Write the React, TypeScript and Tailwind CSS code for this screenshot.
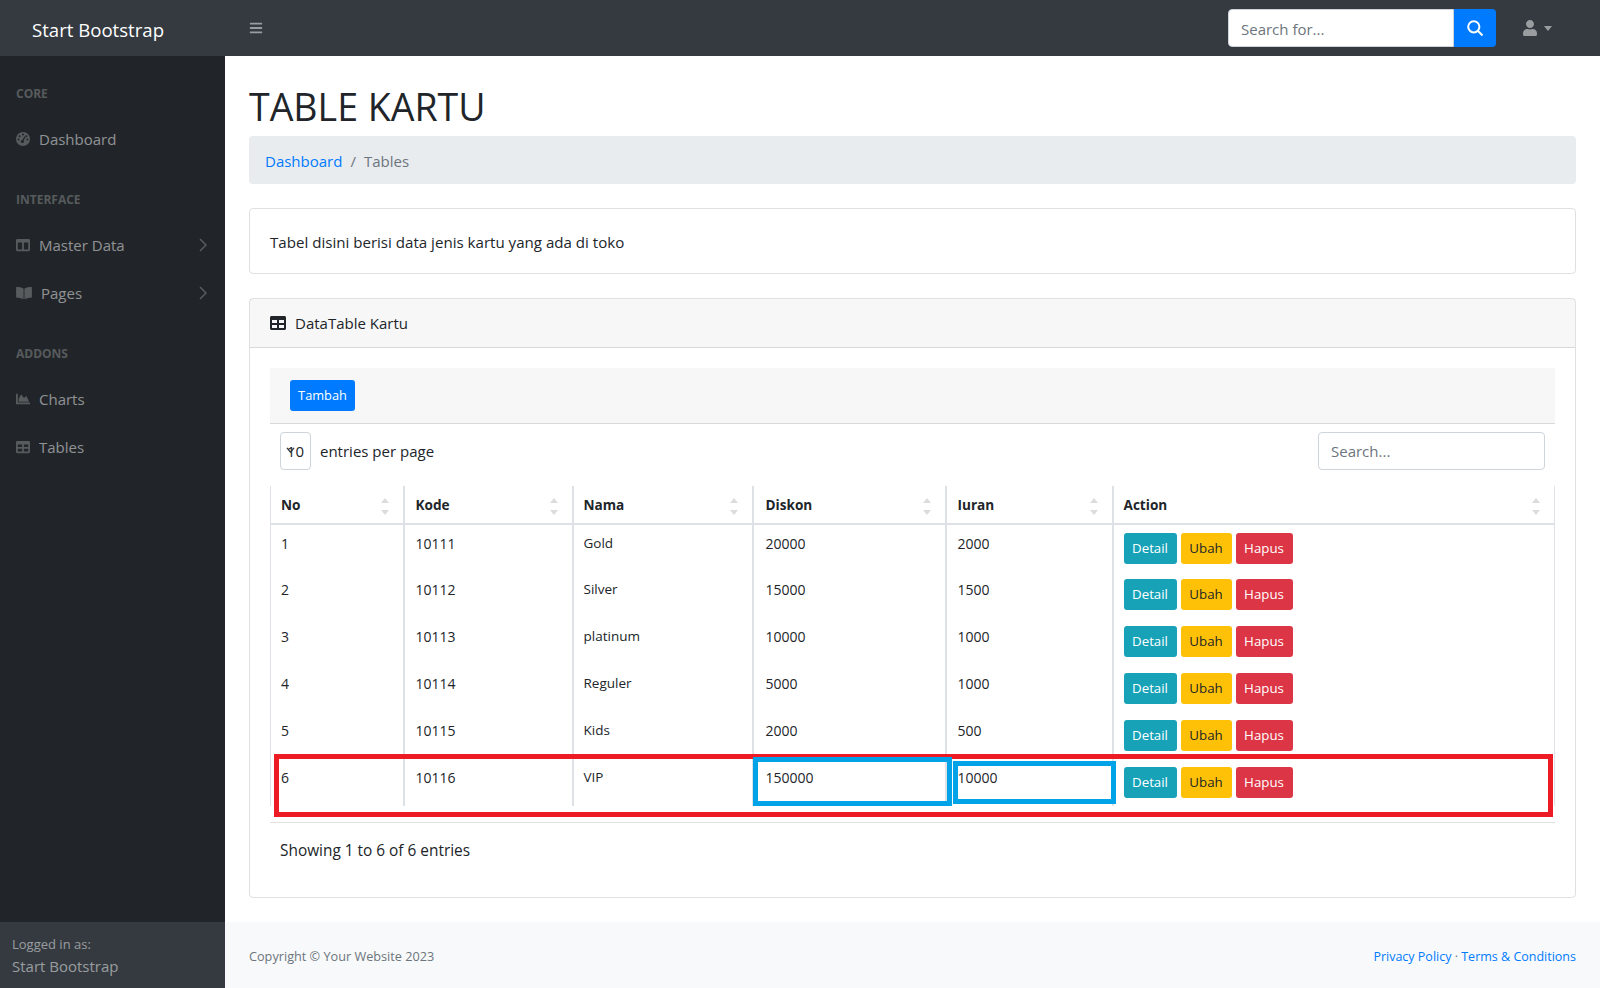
import { FaBars, FaBookOpen, FaChartArea, FaColumns, FaTable, FaUser } from "react-icons/fa";

const rows = [
  ["1", "10111", "Gold", "20000", "2000"],
  ["2", "10112", "Silver", "15000", "1500"],
  ["3", "10113", "platinum", "10000", "1000"],
  ["4", "10114", "Reguler", "5000", "1000"],
  ["5", "10115", "Kids", "2000", "500"],
  ["6", "10116", "VIP", "150000", "10000"],
];

const headers = [
  { label: "No", width: "w-[133px]", pad: "pl-[10px]" },
  { label: "Kode", width: "w-[169px]", pad: "pl-[11px]" },
  { label: "Nama", width: "w-[180px]", pad: "pl-[10px]" },
  { label: "Diskon", width: "w-[193px]", pad: "pl-[12px]" },
  { label: "Iuran", width: "w-[167px]", pad: "pl-[11px]" },
  { label: "Action", width: "w-[442px]", pad: "pl-[10px]" },
];

function SortArrows() {
  return (
    <span className="absolute right-[14px] top-[12px] flex flex-col gap-[7px]">
      <span className="h-0 w-0 border-x-[4px] border-b-[5px] border-x-transparent border-b-[#dcdcdc]" />
      <span className="h-0 w-0 border-x-[4px] border-t-[5px] border-x-transparent border-t-[#dcdcdc]" />
    </span>
  );
}

function GaugeIcon() {
  return (
    <svg viewBox="0 0 14 14" className="h-[14px] w-[14px]">
      <circle cx="7" cy="7" r="7" fill="currentColor" />
      <g fill="#212529">
        <circle cx="7" cy="2.6" r="1" />
        <circle cx="3.6" cy="4.2" r="1" />
        <circle cx="10.4" cy="4.2" r="1" />
        <circle cx="2.6" cy="7.6" r="1" />
        <circle cx="11.4" cy="7.6" r="1" />
        <circle cx="6.4" cy="9.4" r="1.5" />
      </g>
      <path d="M6.4 9.4L9 4.6" stroke="#212529" strokeWidth="1.2" />
    </svg>
  );
}

function Chevron() {
  return (
    <svg viewBox="0 0 8 14" className="ml-auto mb-[2px] h-[14px] w-[8px] text-white/25" fill="none" stroke="currentColor" strokeWidth="1.5">
      <path d="M1 1l6 6-6 6" />
    </svg>
  );
}

function NavHeading({ children }: { children: string }) {
  return <div className="px-4 pt-[27px] pb-[13px] text-[12px] leading-[18px] font-bold uppercase text-white/25">{children}</div>;
}

function NavItem({ icon, label, caret }: { icon: React.ReactNode; label: string; caret?: boolean }) {
  return (
    <div className="flex h-[48px] items-center pl-4 pr-[18px] text-[15px] text-white/50">
      <span className="mr-[9px] mb-[2px] flex text-[14px] text-white/25">{icon}</span>
      <span className="pb-[2px]">{label}</span>
      {caret && <Chevron />}
    </div>
  );
}

export default function App() {
  return (
    <div className="flex h-[988px] flex-col overflow-hidden bg-white text-[15px] text-[#212529] [font-family:'Open_Sans',sans-serif]">
      <nav className="flex h-[56px] shrink-0 items-center bg-[#343a40]">
        <div className="w-[225px] pl-8 pt-[4px] text-[18.6px] text-white">Start Bootstrap</div>
        <button className="ml-[24px] text-[14px] text-white/50">
          <FaBars />
        </button>
        <div className="ml-auto flex h-[38px] w-[268px] overflow-hidden rounded">
          <input
            placeholder="Search for..."
            className="min-w-0 flex-1 rounded-l border border-[#ced4da] bg-white px-3 pt-[2px] text-[15px] outline-none placeholder:text-[#6c757d]"
          />
          <div className="flex w-[42px] items-center justify-center bg-[#007bff] text-white">
            <svg viewBox="0 0 16 16" className="h-[16px] w-[16px]" fill="none" stroke="currentColor" strokeWidth="2">
              <circle cx="6.8" cy="6.8" r="5.6" />
              <path d="M10.8 10.8L15.5 15.5" />
            </svg>
          </div>
        </div>
        <div className="ml-[26px] mr-[48px] flex items-center gap-[6px] text-white/50">
          <FaUser className="text-[16px]" />
          <span className="h-0 w-0 border-x-[4px] border-t-[5px] border-x-transparent border-t-white/50" />
        </div>
      </nav>

      <div className="flex min-h-0 flex-1">
        <aside className="flex w-[225px] shrink-0 flex-col bg-[#212529]">
          <div className="flex-1 pt-[2px]">
            <NavHeading>Core</NavHeading>
            <NavItem icon={<GaugeIcon />} label="Dashboard" />
            <NavHeading>Interface</NavHeading>
            <NavItem icon={<FaColumns />} label="Master Data" caret />
            <NavItem icon={<FaBookOpen className="h-[14px] w-[16px]" />} label="Pages" caret />
            <NavHeading>Addons</NavHeading>
            <NavItem icon={<FaChartArea />} label="Charts" />
            <NavItem icon={<FaTable />} label="Tables" />
          </div>
          <div className="h-[66px] bg-[#343a40] px-3 pt-[12px] text-white/50">
            <div className="text-[13px] leading-[21px]">Logged in as:</div>
            <div className="text-[15px] leading-[22px]">Start Bootstrap</div>
          </div>
        </aside>

        <div className="flex min-w-0 flex-1 flex-col">
          <main className="flex-1 pl-[24px] pr-[24px]">
            <h1 className="mt-[27px] mb-[5px] text-[37.5px] leading-[48px] font-normal">TABLE KARTU</h1>
            <div className="flex h-[48px] items-center rounded bg-[#e9ecef] px-4 pt-[2px]">
              <span className="text-[#007bff]">Dashboard</span>
              <span className="px-2 text-[#6c757d]">/</span>
              <span className="text-[#6c757d]">Tables</span>
            </div>

            <div className="mt-6 flex h-[66px] items-center rounded border border-black/12 px-5 pt-[2px] text-[15.1px]">Tabel disini berisi data jenis kartu yang ada di toko</div>

            <div className="mt-6 h-[600px] rounded border border-black/12">
              <div className="flex h-[49px] items-center gap-[9px] border-b border-black/12 bg-black/3 px-5">
                <FaTable className="text-[16px]" />
                <span>DataTable Kartu</span>
              </div>
              <div className="px-5 pt-5">
                <div className="flex h-[56px] items-center border-b border-black/12 bg-black/3 px-5">
                  <button className="h-[31px] w-[65px] rounded-[3px] bg-[#007bff] pt-[1px] text-[12.8px] text-white">Tambah</button>
                </div>

                <div className="flex items-center justify-between px-[10px] pt-[8px]">
                  <div className="flex items-center gap-[9px]">
                    <div className="relative flex h-[38px] w-[31px] items-center justify-end rounded border border-[#ced4da] pr-[6px]">
                      10
                      <svg viewBox="0 0 10 8" className="absolute left-[5px] top-[14px] h-[7px] w-[9px]" fill="none" stroke="#343a40" strokeWidth="1.6">
                        <path d="M1 1l4 5 4-5" />
                      </svg>
                    </div>
                    <span>entries per page</span>
                  </div>
                  <input placeholder="Search..." className="h-[38px] w-[227px] rounded border border-[#ced4da] px-3 text-[15px] outline-none placeholder:text-[#6c757d]" />
                </div>

                <div className="relative mt-4">
                  <table className="w-[1284px] table-fixed border-collapse text-[14px]">
                    <thead>
                      <tr className="h-[38px]">
                        {headers.map((h, i) => (
                          <th key={h.label} className={`relative border-b-2 border-[#dee2e6] pt-[2px] pr-[10px] text-left text-[13.6px] font-bold ${h.pad} ${h.width} ${i === 0 ? "border-l" : "border-l-2"} ${i === 5 ? "border-r" : ""}`}>
                            {h.label}
                            <SortArrows />
                          </th>
                        ))}
                      </tr>
                    </thead>
                    <tbody>
                      {rows.map((row) => (
                        <tr key={row[0]} className="h-[47px]">
                          {row.map((cell, i) => (
                            <td key={i} className={`border-[#dee2e6] pr-[10px] pb-[10px] align-middle leading-[21px] ${headers[i].pad} ${i === 0 ? "border-l" : "border-l-2"} ${i === 2 ? "text-[13.5px]" : ""}`}>
                              {cell}
                            </td>
                          ))}
                          <td className="border-r border-l-2 border-[#dee2e6] px-[10px] align-middle">
                            <div className="flex gap-1 text-[13.3px]">
                              <button className="h-[31px] w-[53px] rounded-[3px] bg-[#17a2b8] pt-[1px] text-white">Detail</button>
                              <button className="h-[31px] w-[51px] rounded-[3px] bg-[#ffc107] pt-[1px] text-[#212529]">Ubah</button>
                              <button className="h-[31px] w-[57px] rounded-[3px] bg-[#dc3545] pt-[1px] text-white">Hapus</button>
                            </div>
                          </td>
                        </tr>
                      ))}
                    </tbody>
                  </table>

                  {/* markup drawn over the last row */}
                  <div className="absolute left-[4px] top-[268px] h-[63px] w-[1279px] border-[5px] border-[#ed1c24]" />
                  <div className="absolute left-[483px] top-[271px] h-[49px] w-[199px] border-[5px] border-[#00a2e8]" />
                  <div className="absolute left-[683px] top-[275px] h-[43px] w-[163px] border-[5px] border-[#00a2e8]" />
                </div>

                <div className="mt-[16px] border-t border-black/12 px-[10px] pt-[16px] text-[15.4px] leading-[24px]">Showing 1 to 6 of 6 entries</div>
              </div>
            </div>
          </main>

          <footer className="flex h-[66px] shrink-0 items-center justify-between bg-[#f8f9fa] pl-[24px] pr-[24px] pt-[4px] text-[12.7px]">
            <span className="text-[#6c757d]">Copyright © Your Website 2023</span>
            <span className="text-[12.5px] text-[#6c757d]">
              <span className="text-[#007bff]">Privacy Policy</span> · <span className="text-[#007bff]">Terms &amp; Conditions</span>
            </span>
          </footer>
        </div>
      </div>
    </div>
  );
}
